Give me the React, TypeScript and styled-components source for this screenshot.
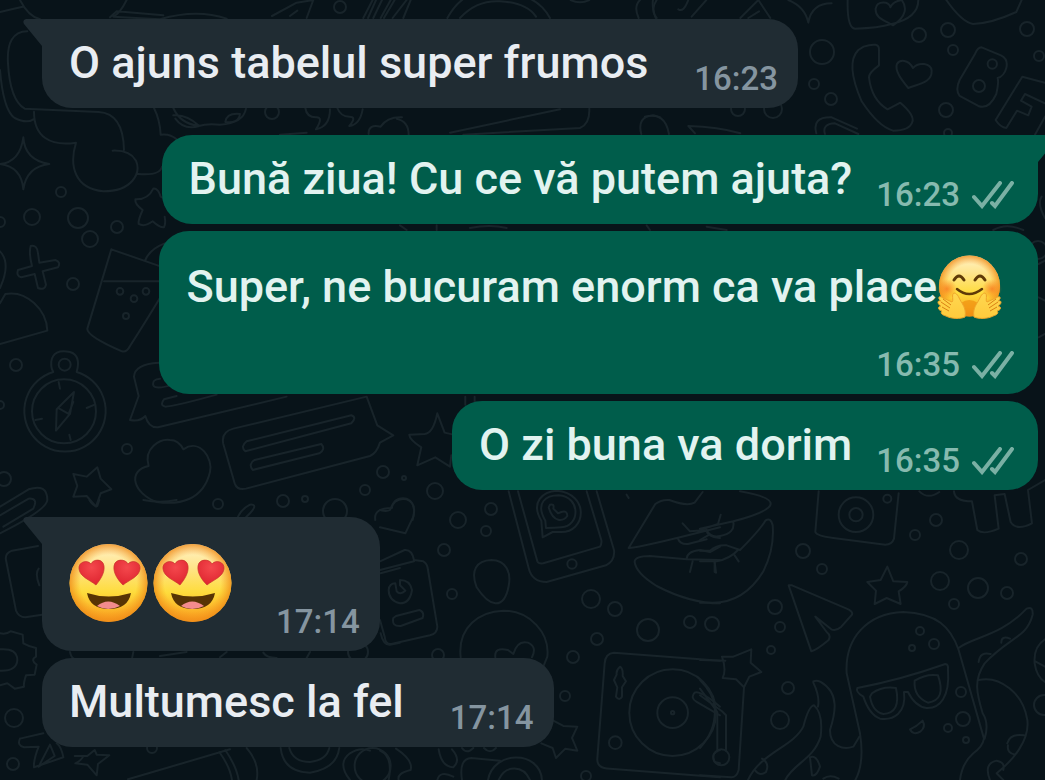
import React from 'react';
import styled, { createGlobalStyle } from 'styled-components';

const GlobalStyle = createGlobalStyle`
  * { box-sizing: border-box; }
  body { margin: 0; background: #081319; }
`;

const Page = styled.main`
  position: relative;
  min-height: 100vh;
  overflow: hidden;
  padding: 19px 7px 32px 42px;
  background: #081319;
  font-family: Roboto, 'Noto Sans', sans-serif;
`;

const Wallpaper = styled.svg`
  position: absolute;
  inset: 0;
  width: 100%;
  height: 100%;
  fill: none;
  stroke: #18242a;
  stroke-width: 6;
  stroke-linecap: round;
  stroke-linejoin: round;
`;

const Thread = styled.div`
  position: relative;
  display: flex;
  flex-direction: column;
  gap: 27px;
`;

const Group = styled.section<{ $out?: boolean }>`
  display: flex;
  flex-direction: column;
  align-items: ${p => (p.$out ? 'flex-end' : 'flex-start')};
  gap: 7px;
`;

const Bubble = styled.article<{ $out?: boolean; $tail?: boolean; $stacked?: boolean; $gap?: number }>`
  position: relative;
  display: flex;
  flex-direction: ${p => (p.$stacked ? 'column' : 'row')};
  align-items: flex-end;
  justify-content: space-between;
  column-gap: ${p => p.$gap ?? (p.$out ? 24 : 46)}px;
  padding: 14px ${p => (p.$out ? 24 : 20)}px 9px 27px;
  border-radius: 30px;
  border-top-left-radius: ${p => (p.$tail && !p.$out ? 0 : 30)}px;
  border-top-right-radius: ${p => (p.$tail && p.$out ? 0 : 30)}px;
  background: ${p => (p.$out ? '#005d4b' : '#202c33')};
  color: ${p => (p.$out ? '#e2f3f0' : '#e9edf2')};
`;

const Tail = styled.svg<{ $out?: boolean }>`
  position: absolute;
  top: 0;
  width: 20px;
  height: 28px;
  fill: ${p => (p.$out ? '#005d4b' : '#202c33')};
  ${p => (p.$out ? 'right: -19px; transform: scaleX(-1);' : 'left: -19px;')}
`;

const Body = styled.p`
  display: flex;
  align-items: center;
  margin: 0;
  padding-bottom: 6px;
  font-size: 45px;
  font-weight: 500;
  line-height: 60px;
  white-space: nowrap;
`;

const TallBody = styled(Body)`
  padding: 10px 12px 26px 0;
`;

const EmojiBody = styled(Body)`
  padding: 12px 0 19px;
`;

const Meta = styled.footer<{ $out?: boolean }>`
  display: flex;
  align-items: center;
  gap: 12px;
  font-size: 33px;
  font-weight: 500;
  line-height: 40px;
  color: ${p => (p.$out ? '#86baaf' : '#8595a0')};
`;

const Ticks = styled.svg`
  width: 42px;
  height: 28px;
  fill: none;
  stroke: #7ab0a4;
  stroke-width: 4;
  stroke-linecap: round;
`;

const HeartEyes = styled.svg`
  width: 84px;
  height: 80px;
`;

const Hug = styled.svg`
  width: 65px;
  height: 64px;
`;

function Time({ children, out }: { children: string; out?: boolean }) {
  return (
    <Meta $out={out}>
      <time>{children}</time>
      {out && (
        <Ticks viewBox="0 0 42 28" role="img" aria-label="Livrat">
          <path d="M2 16L10 25L28 2M20 22L23 25L40 2" />
        </Ticks>
      )}
    </Meta>
  );
}

function BubbleTail({ out }: { out?: boolean }) {
  return (
    <Tail $out={out} viewBox="0 0 20 28" aria-hidden="true">
      <path d="M20 0H3Q-1 1 1 5L19 27V28H20Z" />
    </Tail>
  );
}

function HeartEyesFace() {
  return (
    <HeartEyes viewBox="0 0 84 80" role="img" aria-label="Față zâmbitoare cu ochi inimioare">
      <circle cx="39.5" cy="40" r="39" fill="url(#face)" />
      <circle cx="39.5" cy="40" r="39" fill="url(#glow)" />
      <g fill="url(#heart)" stroke="#c9352b" strokeWidth=".7">
        <path d="M27 42C21 37 11 34 10 26C9 19 18 16 22 21C24 16 34 15 35 23C36 30 31 37 27 42Z" />
        <path d="M54 42C60 37 70 34 71 26C72 19 63 16 59 21C57 16 46 15 45 23C44 30 49 37 54 42Z" />
      </g>
      <path d="M18 50Q39.5 57 62 50Q59 66 40 66Q21 66 18 50Z" fill="#573404" />
      <path d="M28 63Q39 54 51 63Q39 69 28 63Z" fill="#f38b8d" />
    </HeartEyes>
  );
}

function HugFace() {
  const hand =
    'M28 62C24 64 14 64 9 61C5 60 3 58 5 56C1 55 0 52 4 51C0 49 0 45 4 46C0 43 2 40 6 43L15 47C17 46 14 39 17 38C21 38 22 44 25 48C28 53 29 57 28 62Z';
  return (
    <Hug viewBox="0 0 65 64" role="img" aria-label="Față care îmbrățișează">
      <circle cx="32.5" cy="31" r="30.5" fill="url(#face)" />
      <circle cx="32.5" cy="31" r="30.5" fill="url(#glow)" />
      <circle cx="10" cy="34" r="10" fill="url(#blush)" />
      <circle cx="55" cy="34" r="10" fill="url(#blush)" />
      <g fill="none" stroke="#5f3a08" strokeWidth="3" strokeLinecap="round">
        <path d="M17 25Q22 17 27 25M38 25Q43 17 48 25" />
        <path d="M20 34Q32 44 45 34" strokeWidth="2.5" />
      </g>
      <path d="M24 48Q32 42 41 48V61H24Z" fill="#f0900f" opacity=".7" />
      <g fill="url(#hand)" stroke="#f0a52a" strokeWidth="1">
        <path d={hand} />
        <path d={hand} transform="matrix(-1 0 0 1 65 0)" />
      </g>
      <path
        d="M6 44L14 50M4 47L13 53M5 52L12 56M59 44L51 50M61 47L52 53M60 52L53 56"
        stroke="#d98214"
        strokeWidth="1"
        fill="none"
      />
    </Hug>
  );
}

function EmojiPaint() {
  return (
    <svg width="0" height="0" aria-hidden="true">
      <defs>
        <linearGradient id="face" x1="0" y1="0" x2="0" y2="1">
          <stop offset="0" stopColor="#fff3c8" />
          <stop offset=".3" stopColor="#ffe48a" />
          <stop offset=".62" stopColor="#fedc3c" />
          <stop offset="1" stopColor="#f99a1c" />
        </linearGradient>
        <radialGradient id="glow" cx=".5" cy=".5" r=".5">
          <stop offset=".72" stopColor="#f7941e" stopOpacity="0" />
          <stop offset="1" stopColor="#ee8b18" stopOpacity=".8" />
        </radialGradient>
        <radialGradient id="heart" cx=".5" cy=".3" r=".7">
          <stop offset="0" stopColor="#f4484d" />
          <stop offset="1" stopColor="#df2530" />
        </radialGradient>
        <radialGradient id="blush">
          <stop offset="0" stopColor="#f8701c" stopOpacity=".75" />
          <stop offset="1" stopColor="#f8701c" stopOpacity="0" />
        </radialGradient>
        <linearGradient id="hand" x1="0" y1="0" x2="0" y2="1">
          <stop offset="0" stopColor="#ffd750" />
          <stop offset="1" stopColor="#ffcb3c" />
        </linearGradient>
      </defs>
    </svg>
  );
}

const PaintHolder = styled.div`
  position: absolute;
  height: 0;
  overflow: hidden;
`;

const rings: [number, number, number][] = [
  [61, 192, 5], [32, 217, 8], [0, 222, 5], [78, 218, 10], [117, 227, 6], [90, 239, 8],
  [73, 284, 6], [272, 112, 7], [340, 7, 6], [16, 365, 6], [0, 405, 4], [127, 449, 5],
  [4, 479, 7], [218, 504, 5], [283, 501, 6], [305, 499, 3], [335, 511, 12], [383, 472, 6],
  [365, 490, 5], [435, 491, 8], [404, 478, 2], [822, 52, 12], [814, 84, 5], [831, 99, 6],
  [919, 35, 7], [948, 30, 7], [953, 50, 5], [946, 110, 7], [1027, 29, 7], [1039, 56, 5],
  [738, 109, 7], [773, 109, 9], [948, 133, 4], [458, 520, 8], [491, 509, 6], [486, 531, 5],
  [444, 550, 6], [452, 594, 5], [438, 655, 6], [591, 599, 9], [615, 609, 7], [648, 630, 11],
  [690, 622, 6], [712, 624, 7], [597, 639, 6], [573, 657, 6], [565, 696, 5], [586, 776, 5],
  [803, 551, 7], [822, 569, 5], [936, 520, 6], [915, 535, 5], [959, 550, 9], [1021, 559, 6],
  [940, 581, 9], [978, 588, 10], [1007, 593, 6], [954, 604, 5], [775, 607, 7], [780, 627, 5],
  [771, 650, 4], [788, 688, 6], [780, 720, 9], [920, 631, 4], [934, 644, 5], [912, 648, 3],
  [961, 692, 5], [963, 719, 7], [948, 728, 4], [966, 740, 3], [1044, 705, 10], [14, 718, 9],
  [13, 764, 6], [152, 748, 5], [358, 652, 10], [1038, 250, 9],
];

function Doodles() {
  return (
    <Wallpaper aria-hidden="true">
      <g strokeWidth="2">
        {rings.map(([x, y, r]) => (
          <circle key={`${x}-${y}`} cx={x} cy={y} r={r} />
        ))}
      </g>
      {/* flask, cloud and sparkle */}
      <g transform="scale(.3333)">
        <path d="M0 36Q32 28 68 20M60 0Q84 48 120 58M380 0Q360 40 340 50L480 58Q590 26 680 56M330 52L350 34L490 46" />
        <path d="M82 94C38 94 20 130 24 190Q30 300 74 326L296 336Q370 340 372 450M0 210Q10 330 44 354Q80 372 100 358M102 335C102 410 150 440 228 428C206 500 226 566 310 574C396 574 424 520 408 482Q390 450 338 452M414 522Q480 528 486 500M462 324Q480 360 482 404Q510 400 530 418" />
        <path d="M70 412Q74 480 148 492Q80 500 70 568Q64 500 0 492Q60 486 70 412Z" />
        <path d="M460 566Q474 564 482 590L500 600M460 566Q444 600 406 598Q404 612 428 630Q414 660 416 672Q434 682 458 664Q480 684 492 682Q498 670 494 650" />
        <path d="M520 324Q540 370 596 378Q620 370 660 374Q730 370 738 326M520 346Q560 342 598 378Q552 392 526 356M676 366Q680 338 720 342Q716 372 676 366M916 324Q920 352 948 352Q972 350 948 388Q990 380 990 328M1012 324Q1022 350 1048 350Q1072 350 1048 378Q1080 374 1088 328" />
        <path d="M816 48L890 8L940 0L920 54M870 48L892 32M1090 54L1118 0M1120 54L1146 0M1152 54L1184 0M1178 54L1220 0M1106 402Q1104 372 1142 380Q1162 350 1206 352M840 404L920 398" />
      </g>
      {/* top strip */}
      <g transform="translate(360 0) scale(.3333)">
        <path d="M24 54L48 0M62 54L92 0M130 54L152 0M262 54Q320 -50 430 -20Q530 -20 570 54M300 54Q350 0 420 4Q500 8 528 50M632 0Q660 14 688 0M836 54Q820 20 840 0M890 54Q870 30 890 0" />
        <path d="M110 356Q146 364 146 404M270 398L600 328M310 404L660 384Q690 372 688 326M844 402Q830 350 880 346L900 352" />
      </g>
      {/* phone receiver, hearts and letters */}
      <g transform="translate(645 0) scale(.3333)">
        <path d="M32 54Q20 20 24 0M100 28Q116 38 130 0M140 50L184 0M286 54L340 0L376 54M310 54L342 34M430 0Q480 20 490 68Q500 10 560 10" />
        <path d="M608 0Q606 84 630 86Q700 84 740 72Q820 54 820 0M770 0C786 20 786 48 744 76C716 60 690 54 692 26C696 0 736 4 736 22Q744 4 770 0ZM904 0Q950 66 984 72Q1040 70 1114 36L1130 0" />
        <path d="M656 140Q704 124 702 150V196Q672 218 672 232Q680 300 728 328L766 308Q810 346 802 366Q794 392 744 392Q700 380 650 304Q600 190 640 150Z" />
        <path d="M790 264C770 240 748 212 756 192C764 178 790 178 804 204C822 184 858 190 860 212C862 248 820 252 790 264Z" />
        <path d="M1010 142L1068 166C1100 182 1082 228 1058 234Q1062 246 1054 282Q1032 330 1000 318L944 288Q930 270 944 240L990 162Q998 142 1010 142ZM1042 178A14 14 0 1 0 1042 206A14 14 0 1 0 1042 178M1002 240A18 18 0 1 0 1002 276A18 18 0 1 0 1002 240M1200 248L1132 230L1052 360Q1066 382 1084 384L1116 332L1150 346L1160 320L1128 302L1140 282L1200 310M1170 404L1200 350" />
        <path d="M0 350Q60 334 72 402M150 400L130 378Q220 380 286 400M514 400Q500 350 560 352L636 386M540 402Q530 372 570 370L640 402M1190 590Q1176 610 1200 654" />
      </g>
      {/* drink, compass and speech banners */}
      <g transform="translate(0 220) scale(.3333)">
        <path d="M92 78Q112 74 114 100L118 128L166 120Q184 126 174 142L128 154L138 194Q134 212 114 204L104 162L64 172Q48 168 54 150L96 138Q86 100 92 78ZM0 94Q34 130 0 204M0 250L16 222C80 210 140 270 142 332L0 372" />
        <path d="M334 88L490 142M334 88L262 326Q260 348 366 394Q380 398 390 378Q440 300 482 230M312 184H480M436 120Q450 86 500 68" />
        <circle cx="360" cy="214" r="10" /><circle cx="438" cy="214" r="10" /><circle cx="402" cy="236" r="10" /><circle cx="378" cy="288" r="9" />
        <circle cx="192" cy="574" r="96" />
        <path d="M160 456A122 122 0 1 0 230 456Q244 406 210 396Q160 386 154 424Q152 444 160 456M176 486L180 506M260 564L284 554M106 600L126 596M208 644L212 660M222 516L170 568L168 632L210 582ZM178 566L206 582L220 546" />
        <circle cx="194" cy="434" r="18" />
        <path d="M476 428Q404 432 402 470L416 528L390 600Q420 606 436 588Q446 624 474 622L860 530M480 476Q456 478 460 496Q466 510 520 494M530 528L492 538Q478 556 496 560Q520 560 650 524" />
        <path d="M1100 530L700 626Q662 636 670 672L704 790Q712 812 738 806L1110 708Q1130 700 1140 668L1180 646L1132 616ZM740 664Q720 680 736 694L1054 610Q1072 592 1054 586ZM764 720Q744 732 758 750L958 700Q978 688 964 672Z" />
        <path d="M446 738C430 684 480 656 510 660Q536 660 550 688C600 654 640 716 630 756C610 840 540 856 470 846C400 820 380 752 446 738Z" />
        <path d="M292 742L302 776L334 808L302 820L288 860L260 828L220 830L232 798L220 762L260 770ZM1312 580L1334 638L1360 644M1312 580Q1300 640 1274 642L1228 644Q1228 658 1264 682L1252 736L1306 712L1350 740L1354 706" />
        <path d="M0 860L86 808Q142 790 142 840Q140 870 0 940M0 886L86 836Q116 834 100 866L10 920M710 900Q720 870 750 854Q776 852 750 880L730 900M1126 900Q1120 864 1176 864Q1180 830 1220 836Q1252 850 1238 900M1396 530V554M1424 530V548" />
      </g>
      {/* gear, card and bottom left scraps */}
      <g transform="translate(0 500) scale(.3333)">
        <path d="M268 0Q280 20 292 18L298 0M430 0Q480 10 530 0M114 138L36 152Q14 160 18 180L48 332Q56 352 76 352L126 344M116 206Q104 220 118 256M0 400Q20 404 32 394L68 404L70 430Q88 440 108 444V470Q90 480 110 494L104 524L78 526Q70 550 72 560L44 566L22 550L0 556" />
        <path d="M0 448Q52 444 52 480Q50 514 0 512M60 716L130 700M60 716Q50 736 72 742L116 740Q100 780 102 802L190 772Q184 740 170 730M116 800L150 734L164 768Z" />
        <path d="M224 768L262 768L284 750L290 764L328 766L294 792L290 826L262 794L226 790Q246 780 250 768M384 838L690 748M658 756Q690 800 696 840M676 750Q710 800 716 840M740 744Q780 790 770 840M842 744Q850 816 930 818Q1010 806 1018 744M868 744Q880 786 930 786Q980 780 988 744M1050 840Q1010 790 1050 760Q1080 740 1110 752" />
        <circle cx="1118" cy="798" r="54" />
        <path d="M210 456Q214 474 222 476M400 456L396 476M480 468L560 456M660 472L680 456M790 458Q800 474 830 474M920 474L930 456M1142 220L1200 204M1142 400Q1150 436 1170 434L1200 428" />
      </g>
      {/* phone, badge and turntable */}
      <g transform="translate(380 480) scale(.3333)">
        <path d="M0 90Q20 96 30 90Q44 50 80 58Q110 70 100 110L76 160L0 142M0 244L74 210Q96 208 102 240L130 244Q142 250 144 270L172 440Q172 460 150 466L34 492Q16 494 14 470L0 420M0 270L102 244M60 300Q90 300 96 330Q90 370 60 370Q26 362 26 330Q28 310 46 310L50 334Q60 346 76 332L60 316ZM48 408L118 390Q134 396 128 414L62 438Q34 440 40 414Z" />
        <path d="M334 240C380 240 394 280 386 318Q376 372 346 370Q320 368 290 322C270 270 290 242 334 240ZM242 532C232 440 300 394 370 392C450 392 510 460 502 530L490 560M346 532Q342 500 384 510L400 522Q412 480 444 488Q472 500 456 532" />
        <path d="M386 34L446 264Q456 306 500 306L678 256Q706 242 702 210L650 34M414 34L472 244Q476 252 490 250L660 200Q666 190 664 180L620 34M488 172L484 122C450 66 490 34 530 32C630 40 620 160 540 156L518 156ZM498 144L496 122C464 66 500 46 536 46C604 50 600 140 544 142Q524 144 498 144M506 82C520 130 550 124 562 108Q562 90 544 96L534 100L520 86Q524 70 510 74Z" />
        <circle cx="576" cy="252" r="14" />
        <path d="M746 204L826 72Q844 58 868 60Q920 80 944 68L968 36M746 204Q760 206 900 172L1020 142M894 176Q900 194 924 192L980 178M908 130L930 154L980 150Q980 170 1020 174M764 246Q764 228 810 228L920 238Q920 214 960 210L990 216L1020 200M920 238L1020 240M938 244L930 276M1004 244V276M764 246Q768 280 830 318Q930 370 1020 370M740 44L746 54" />
        <path d="M1020 542L702 518Q676 520 674 550L652 836Q650 866 690 866L1020 892M720 560Q708 570 710 584L702 600L712 622L708 650Q718 664 726 650V622L738 604L728 588Q730 566 720 560ZM1020 680Q960 630 944 638Q930 654 950 666L1020 706M1020 810Q990 820 1004 846L1020 850" />
        <circle cx="878" cy="698" r="130" /><circle cx="878" cy="698" r="46" /><circle cx="878" cy="698" r="5" /><circle cx="706" cy="788" r="19" />
        <path d="M520 722L550 738L592 740L576 774L592 812L556 806L528 834L518 804L484 790M176 808Q184 860 220 862Q244 840 216 808M246 804Q260 824 280 804M312 804Q330 824 348 804M172 900Q180 870 220 890M0 812Q40 830 26 900M48 806Q100 840 92 870Q50 880 56 900M246 900Q236 836 274 834L360 842M324 900C340 810 480 810 486 900M356 900C376 854 430 854 450 900" />
      </g>
      {/* lips, camera, paper plane and octopus */}
      <g transform="translate(700 480) scale(.3333)">
        <path d="M120 34Q214 50 212 72Q208 96 100 124L0 146M62 104L54 132L0 150M20 150Q30 174 60 168Q106 160 100 126M0 180L24 166M0 212H30Q50 194 80 196L120 210Q180 150 196 122Q212 110 218 136Q224 206 190 274Q130 372 30 368H0M0 244H50Q90 236 114 210M44 246L48 278M104 226L116 244" />
        <path d="M356 34L346 156Q350 168 400 174L556 194Q576 194 582 176L596 40M266 316L334 514Q350 510 386 480Q394 466 380 456L346 410L394 448Q408 454 424 440L456 404Q460 394 440 386L276 316Z" />
        <circle cx="468" cy="104" r="52" /><circle cx="468" cy="104" r="20" /><circle cx="562" cy="56" r="12" />
        <path d="M562 260L580 304L622 306Q620 320 596 334L602 372L560 354L524 372L528 332L502 306L542 300ZM658 34Q684 60 718 36M762 34Q764 64 816 64L832 150Q850 166 896 146L884 46L914 42L932 126Q950 154 996 130L984 30L1035 0" />
        <path d="M466 900Q494 850 480 760L440 580C434 476 500 400 610 396C710 400 752 440 776 510L852 776Q848 800 820 820Q786 850 780 900M776 504C820 470 900 470 980 386Q1000 378 998 404C980 474 930 470 854 550C820 600 830 640 848 700Q868 730 854 776M836 600C900 586 970 640 982 720C990 780 940 840 890 880L910 900M904 488Q904 466 930 476M836 546Q840 514 872 522M922 790Q930 760 972 766M924 796Q920 820 946 824M870 900Q850 850 890 842Q916 846 910 870M1035 478Q1000 500 1004 550Q1010 590 1035 606M1006 544L1035 560" />
        <path d="M472 624Q600 600 736 552Q746 552 744 570C750 650 720 686 680 684Q646 680 624 636H612C620 700 580 722 540 716Q508 704 490 650Q466 636 472 624ZM516 640Q546 618 588 624Q604 700 550 702Q518 696 510 650ZM644 602Q680 580 714 586Q740 660 684 668Q640 650 644 602ZM668 722Q678 740 662 754Q640 768 630 748Q650 740 668 722Z" />
        <path d="M340 604Q350 600 362 606C420 640 406 700 390 750C390 800 430 810 460 800L478 770M340 608Q360 650 354 680M342 676Q326 678 310 740C280 800 180 820 144 900M342 676Q370 700 362 770C340 840 280 850 256 900M330 832Q350 824 360 860Q350 890 336 886ZM186 836Q210 850 198 876Q180 890 166 872M370 896Q390 882 416 896" />
        <path d="M0 540L76 542M68 594Q80 570 66 530L100 530L154 508L152 548L184 576L148 590L132 622L108 598ZM132 622L116 870Q110 892 94 892L0 886M0 600Q40 640 44 680M0 626L52 696V814M0 646L66 694L78 706V812M44 680Q50 750 0 804" />
        <circle cx="64" cy="832" r="24" />
      </g>
      {/* slivers between the outgoing bubbles */}
      <g transform="translate(400 224) scale(.3333)">
        <path d="M0 4L20 18M110 4V18M210 12Q270 0 320 12M740 4L750 18M920 8L980 18M1780 18Q1820 -4 1870 18M1916 120L1935 110M1916 220L1935 230M1916 340L1935 330" />
      </g>
    </Wallpaper>
  );
}

export default function App() {
  return (
    <Page>
      <GlobalStyle />
      <Doodles />
      <PaintHolder>
        <EmojiPaint />
      </PaintHolder>
      <Thread>
        <Group>
          <Bubble $tail>
            <BubbleTail />
            <Body>O ajuns tabelul super frumos</Body>
            <Time>16:23</Time>
          </Bubble>
        </Group>
        <Group $out>
          <Bubble $out $tail>
            <BubbleTail out />
            <Body>Bună ziua! Cu ce vă putem ajuta?</Body>
            <Time out>16:23</Time>
          </Bubble>
          <Bubble $out $stacked>
            <TallBody>
              Super, ne bucuram enorm ca va place
              <HugFace />
            </TallBody>
            <Time out>16:35</Time>
          </Bubble>
          <Bubble $out>
            <Body>O zi buna va dorim</Body>
            <Time out>16:35</Time>
          </Bubble>
        </Group>
        <Group>
          <Bubble $tail $gap={39}>
            <BubbleTail />
            <EmojiBody>
              <HeartEyesFace />
              <HeartEyesFace />
            </EmojiBody>
            <Time>17:14</Time>
          </Bubble>
          <Bubble>
            <Body>Multumesc la fel</Body>
            <Time>17:14</Time>
          </Bubble>
        </Group>
      </Thread>
    </Page>
  );
}
